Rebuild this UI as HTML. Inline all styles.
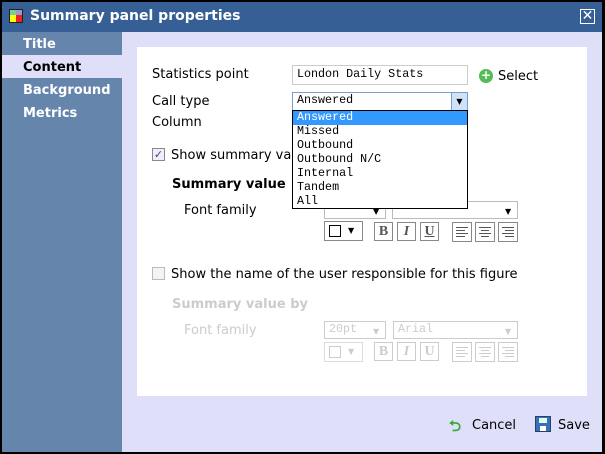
<!DOCTYPE html><html><head><style>
*{margin:0;padding:0;box-sizing:border-box}
body{width:605px;height:454px;background:#000;position:relative;overflow:hidden;font-family:"DejaVu Sans","Liberation Sans",sans-serif;font-size:13px;color:#000}
.a{position:absolute;white-space:nowrap}
.m{font-family:"Liberation Mono",monospace;font-size:11.7px}
.btn{position:absolute;width:19px;height:19px;border:1px solid #888;background:#fff;font-family:"Liberation Serif",serif;font-weight:bold;font-size:14px;text-align:center;line-height:17px;color:#555}
.dis{border-color:#ccc;color:#ccc}
.sel{position:absolute;height:18px;border:1px solid #bbb;background:#fff}
.ar{position:absolute;font-size:8px;color:#000}
</style></head><body>
<div class="a" style="left:2px;top:2px;width:600px;height:30px;background:#365f96"></div>
<div class="a" style="left:9px;top:9px;width:14px;height:14px;background:#222">
<div class="a" style="left:1px;top:1px;width:6px;height:5px;background:#7c9"></div>
<div class="a" style="left:7px;top:1px;width:6px;height:5px;background:#99c"></div>
<div class="a" style="left:1px;top:6px;width:6px;height:7px;background:#ff0"></div>
<div class="a" style="left:7px;top:6px;width:6px;height:7px;background:#e22"></div></div>
<div class="a" style="left:30px;top:8px;color:#fff;font-weight:bold;font-size:14px">Summary panel properties</div>
<div class="a" style="left:580px;top:9px;width:15px;height:15px;border:1.5px solid #fff;color:#fff;font-weight:bold;font-size:14px;line-height:12px;text-align:center">✕</div>
<div class="a" style="left:2px;top:32px;width:600px;height:420px;background:#dfdffa"></div>
<div class="a" style="left:2px;top:32px;width:120px;height:420px;background:#6585ad"></div>
<div class="a" style="left:2px;top:55px;width:120px;height:23px;background:#dfdffa"></div>
<div class="a" style="left:23px;top:37px;color:#fff;font-weight:bold;font-size:13px">Title</div>
<div class="a" style="left:23px;top:60px;color:#000;font-weight:bold;font-size:13px">Content</div>
<div class="a" style="left:23px;top:83px;color:#fff;font-weight:bold;font-size:13px">Background</div>
<div class="a" style="left:23px;top:106px;color:#fff;font-weight:bold;font-size:13px">Metrics</div>
<div class="a" style="left:137px;top:47px;width:450px;height:349px;background:#fff"></div>
<div class="a" style="left:152px;top:67px">Statistics point</div>
<div class="a" style="left:152px;top:94px">Call type</div>
<div class="a" style="left:152px;top:115px">Column</div>
<div class="sel" style="left:292px;top:65px;width:176px;height:20px;border-color:#ccc"></div>
<div class="a m" style="left:297px;top:67px">London Daily Stats</div>
<div class="a" style="left:479px;top:69px;width:14px;height:14px;border-radius:50%;background:#5b5;color:#fff;font-size:12px;line-height:13px;text-align:center;font-weight:bold">+</div>
<div class="a" style="left:498px;top:69px">Select</div>
<div class="sel" style="left:292px;top:92px;width:176px;height:19px;border-color:#7a9cd3"></div>
<div class="a m" style="left:297px;top:93px">Answered</div>
<div class="a" style="left:451px;top:93px;width:16px;height:17px;background:#cfe3f7;border-left:1px solid #7a9cd3;font-size:8px;text-align:center;line-height:17px">▼</div>
<div class="a" style="left:152px;top:148px;width:13px;height:13px;border:1px solid #888;background:#eef;color:#446;font-size:11px;line-height:11px;text-align:center">✓</div>
<div class="a" style="left:171px;top:148px">Show summary value</div>
<div class="a" style="left:172px;top:177px;font-weight:bold;font-size:13px">Summary value</div>
<div class="a" style="left:184px;top:203px">Font family</div>
<div class="sel" style="left:324px;top:201px;width:62px"></div><div class="ar" style="left:373px;top:207px">▼</div>
<div class="sel" style="left:392px;top:201px;width:126px"></div><div class="ar" style="left:505px;top:207px">▼</div>
<div class="a" style="left:324px;top:221px;width:39px;height:20px;border:1px solid #888;background:#fff"><div class="a" style="left:4px;top:3px;width:12px;height:12px;border:1px solid #000"></div><div class="a" style="left:23px;top:4px;font-size:8px">▼</div></div>
<div class="btn" style="left:374px;top:222px">B</div><div class="btn" style="left:397px;top:222px;font-style:italic">I</div><div class="btn" style="left:420px;top:222px;text-decoration:underline">U</div>
<svg class="a" style="left:452px;top:222px" width="66" height="20" fill="none" stroke="#555">
<rect x=".5" y=".5" width="19" height="19" stroke="#888"/><rect x="23.5" y=".5" width="19" height="19" stroke="#888"/><rect x="46.5" y=".5" width="19" height="19" stroke="#888"/>
<path d="M4 5.5h12M4 8.5h9M4 11.5h12M4 14.5h9M27 5.5h12M29 8.5h8M27 11.5h12M29 14.5h8M50 5.5h12M53 8.5h9M50 11.5h12M53 14.5h9"/></svg>
<div class="a" style="left:292px;top:110px;width:176px;height:99px;background:#fff;border:1px solid #000"></div>
<div class="a" style="left:293px;top:111px;width:174px;height:14px;background:#3399ff"></div>
<div class="a m" style="left:297px;top:110px;line-height:14px;color:#000"><span style="color:#fff">Answered</span><br>Missed<br>Outbound<br>Outbound N/C<br>Internal<br>Tandem<br>All</div>
<div class="a" style="left:152px;top:267px;width:13px;height:13px;border:1px solid #bbb;background:#f4f4f4"></div>
<div class="a" style="left:171px;top:267px">Show the name of the user responsible for this figure</div>
<div class="a" style="left:172px;top:297px;font-weight:bold;font-size:13px;color:#ccc">Summary value by</div>
<div class="a" style="left:184px;top:323px;color:#ccc">Font family</div>
<div class="sel" style="left:324px;top:321px;width:62px;border-color:#ccc"></div><div class="a m" style="left:329px;top:322px;color:#ccc">20pt</div><div class="ar" style="left:373px;top:327px;color:#ccc">▼</div>
<div class="sel" style="left:393px;top:321px;width:125px;border-color:#ccc"></div><div class="a m" style="left:398px;top:322px;color:#ccc">Arial</div><div class="ar" style="left:505px;top:327px;color:#ccc">▼</div>
<div class="a" style="left:324px;top:342px;width:39px;height:20px;border:1px solid #ddd"><div class="a" style="left:4px;top:3px;width:12px;height:12px;border:1px solid #ccc"></div><div class="a" style="left:23px;top:4px;font-size:8px;color:#ccc">▼</div></div>
<div class="btn dis" style="left:374px;top:342px">B</div><div class="btn dis" style="left:397px;top:342px;font-style:italic">I</div><div class="btn dis" style="left:420px;top:342px">U</div>
<svg class="a" style="left:452px;top:342px" width="66" height="20" fill="none" stroke="#ccc">
<rect x=".5" y=".5" width="19" height="19"/><rect x="23.5" y=".5" width="19" height="19"/><rect x="46.5" y=".5" width="19" height="19"/>
<path d="M4 5.5h12M4 8.5h9M4 11.5h12M4 14.5h9M27 5.5h12M29 8.5h8M27 11.5h12M29 14.5h8M50 5.5h12M53 8.5h9M50 11.5h12M53 14.5h9"/></svg>
<div class="a" style="left:449px;top:416px;color:#3a3;font-weight:bold;font-size:15px">⮌</div>
<div class="a" style="left:472px;top:418px">Cancel</div>
<div class="a" style="left:535px;top:416px;width:16px;height:16px;background:#3a6fb8;border:1px solid #246"><div class="a" style="left:3px;top:1px;width:8px;height:5px;background:#dfe"></div><div class="a" style="left:4px;top:9px;width:6px;height:5px;background:#fff"></div></div>
<div class="a" style="left:558px;top:418px">Save</div>
</body></html>
